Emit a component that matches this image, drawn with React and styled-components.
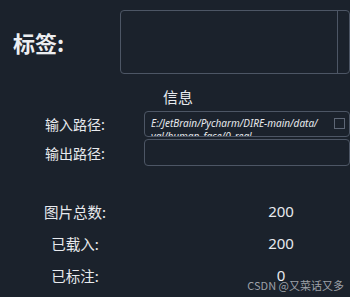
import React from "react";
import styled, { createGlobalStyle } from "styled-components";

const GlobalStyle = createGlobalStyle`
  html, body { margin: 0; padding: 0; background: #1b222c; }
  body { font-family: "Noto Sans CJK SC", "Noto Sans", sans-serif; }
`;

const stats = [
  { label: "图片总数:", value: "200" },
  { label: "已载入:", value: "200" },
  { label: "已标注:", value: "0" },
];

const App = () => {
  return (
    <Page>
      <GlobalStyle />
      <TagRow>
        <TagLabel>标签:</TagLabel>
        <TagBox>
          <ScrollTrack />
        </TagBox>
      </TagRow>

      <InfoTitle>信息</InfoTitle>

      <Form>
        <FieldLabel>输入路径:</FieldLabel>
        <PathBox>
          <PathText>
            E:/JetBrain/Pycharm/DIRE-main/data/
            <br />
            val/human_face/0_real
          </PathText>
          <Check />
        </PathBox>
        <FieldLabel>输出路径:</FieldLabel>
        <PathBox $tall />
      </Form>

      <Stats>
        {stats.map((s) => (
          <StatRow key={s.label}>
            <StatLabel>{s.label}</StatLabel>
            <StatValue>{s.value}</StatValue>
          </StatRow>
        ))}
      </Stats>

      <Watermark>CSDN @又菜话又多</Watermark>
    </Page>
  );
};

const Page = styled.div`
  position: relative;
  width: 350px;
  height: 297px;
  overflow: hidden;
  background: #1b222c;
  color: #e8eaee;
`;

const TagRow = styled.div`
  display: flex;
  align-items: center;
  padding-top: 10px;
`;

const TagLabel = styled.div`
  width: 121px;
  box-sizing: border-box;
  padding-left: 13px;
  font-size: 22px;
  font-weight: bold;
  line-height: 1;
  color: #eceef1;
`;

const TagBox = styled.div`
  display: flex;
  justify-content: flex-end;
  width: 232px;
  height: 64px;
  box-sizing: border-box;
  border: 1px solid #4d5665;
  border-radius: 4px;
`;

const ScrollTrack = styled.div`
  width: 11px;
  border-left: 1px solid #4d5665;
`;

const InfoTitle = styled.div`
  margin: 13px 0 0 163px;
  font-size: 15px;
  line-height: 20px;
`;

const Form = styled.div`
  display: grid;
  grid-template-columns: 130px 206px;
  column-gap: 4px;
  row-gap: 2px;
  margin: 4px 0 0 10px;
  align-items: center;
`;

const FieldLabel = styled.div`
  text-align: center;
  font-size: 14px;
  line-height: 18px;
`;

const PathBox = styled.div`
  display: flex;
  align-items: flex-start;
  justify-content: space-between;
  height: ${(p) => (p.$tall ? "27px" : "26px")};
  box-sizing: border-box;
  border: 1px solid #4d5665;
  border-radius: 4px;
  padding: 5px 4px 0 6px;
  overflow: hidden;
`;

const PathText = styled.div`
  font-family: "Noto Sans", sans-serif;
  font-style: italic;
  font-size: 10px;
  line-height: 13px;
  color: #e8eaee;
  white-space: nowrap;
`;

const Check = styled.div`
  flex: none;
  width: 11px;
  height: 11px;
  margin-top: 1px;
  box-sizing: border-box;
  border: 1px solid #5d6675;
`;

const Stats = styled.div`
  display: flex;
  flex-direction: column;
  margin-top: 29px;
`;

const StatRow = styled.div`
  display: grid;
  grid-template-columns: 150px 262px;
  height: 32px;
  align-items: center;
  font-size: 14.5px;
`;

const StatLabel = styled.div`
  text-align: center;
`;

const StatValue = styled.div`
  text-align: center;
  font-family: "Noto Sans", sans-serif;
  font-size: 15px;
`;

const Watermark = styled.div`
  position: absolute;
  right: 6px;
  bottom: 6px;
  font-size: 11px;
  line-height: 12px;
  color: rgba(200, 204, 210, 0.75);
`;

export default App;
